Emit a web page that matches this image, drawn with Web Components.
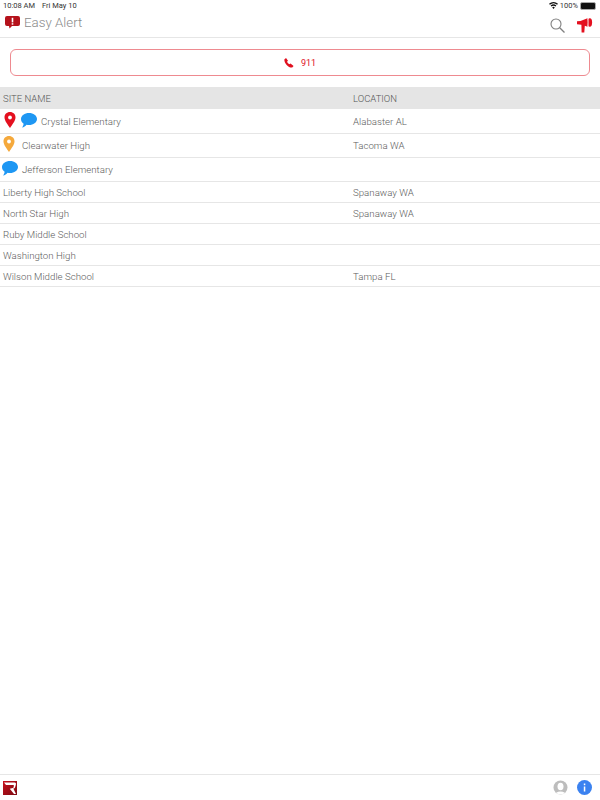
<!DOCTYPE html>
<html><head><meta charset="utf-8"><title>Easy Alert</title>
<style>
html,body{margin:0;padding:0;background:#fff}
body{font-family:Roboto,"Liberation Sans",sans-serif}
</style></head><body>
<ea-app></ea-app>
<script>
const def=(name,css,html)=>customElements.define(name,class extends HTMLElement{
  constructor(){super();this.attachShadow({mode:'open'}).innerHTML='<style>'+css+'</style>'+(typeof html==='function'?html(this):html);}
});
const pin=c=>`<svg style="color:${c};display:block" width="12" height="16" viewBox="0 0 12 16"><path fill="currentColor" d="M6 0C2.700 0 .5 2.400.5 5.400c0 3.400 3.400 7 5.500 10.600 2.100-3.600 5.500-7.200 5.500-10.600C11.500 2.400 9.300 0 6 0z"/><circle cx="6" cy="5.500" r="1.900" fill="#fff"/></svg>`;
const bubble=`<svg style="display:block" width="16" height="15" viewBox="0 0 16 15"><path fill="#1e97f3" d="M8 0c4.300 0 8 2.600 8 6s-3.700 6-8 6c-.9 0-1.700-.1-2.500-.3C4.500 13 2.900 14.200 1 14.500c.9-1 1.500-2.100 1.600-3.700C1 9.700 0 8 0 6c0-3.400 3.700-6 8-6z"/></svg>`;

def('ea-status',`:host{display:flex;justify-content:space-between;align-items:center;height:11px;padding:0 4px 0 3px;font:7.500px/11px Roboto,"Liberation Sans",sans-serif;color:#333}
.l{display:flex;gap:7px}.r{display:flex;align-items:center;gap:2px}
.bat{width:14px;height:6px;background:#111;border-radius:2px;border:0.500px solid #aaa;box-sizing:content-box}`,
`<div class="l"><span>10:08 AM</span><span>Fri May 10</span></div>
<div class="r"><svg width="9" height="7" viewBox="0 0 12 9"><path fill="#111" d="M6 9 4.300 7a2.600 2.600 0 0 1 3.400 0zM3.300 5.800 2.200 4.600a5.800 5.800 0 0 1 7.600 0L8.700 5.800a4.200 4.200 0 0 0-5.400 0zM1.200 3.500 0 2.300a8.900 8.900 0 0 1 12 0l-1.200 1.200a7.200 7.200 0 0 0-9.600 0z"/></svg><span>100%</span><span class="bat"></span></div>`);

def('ea-nav',`:host{display:flex;align-items:flex-start;justify-content:space-between;height:26px;padding:0 7px 0 5px;border-bottom:1px solid #e6e6e6;box-sizing:content-box}
.t{display:flex;align-items:center;gap:4px;font:300 13.300px/24px Roboto,"Liberation Sans",sans-serif;color:#8a8a8a}
.r{display:flex;align-items:center;gap:12px;margin-top:7px}svg{display:block}`,
`<div class="t"><svg width="15" height="14" viewBox="0 0 15 14"><path fill="#b5121b" d="M2 0h11a2 2 0 0 1 2 2v6a2 2 0 0 1-2 2H7l-2.500 2.500L4 10H2a2 2 0 0 1-2-2V2a2 2 0 0 1 2-2z"/><rect x="6.700" y="1.800" width="1.600" height="4.600" fill="#fff"/><rect x="6.700" y="7.200" width="1.600" height="1.500" fill="#fff"/></svg><span>Easy Alert</span></div>
<div class="r"><svg width="15" height="15" viewBox="0 0 15 15" fill="none" stroke="#808080" stroke-width="1.100"><circle cx="6" cy="6" r="5"/><path d="M9.700 9.700 14.500 14.500" stroke-width="1.300"/></svg>
<svg width="16" height="15" viewBox="0 0 16 15"><g fill="#e4101f"><path d="M0 3.200 3.500 3 10.500 .2V8.800L7.800 7.700 7.300 14.500 4.600 14.500 4.400 6.800 0 6.300z"/><ellipse cx="12.800" cy="4.500" rx="2.300" ry="4.200"/></g><path d="M11.200 .5V8.500" stroke="#fff" stroke-width=".7"/></svg></div>`);

def('ea-call',`:host{display:block;padding:11px 10px}
button{display:flex;align-items:center;justify-content:center;gap:7px;box-sizing:border-box;width:100%;height:27px;background:#fff;border:1px solid #ee8a90;border-radius:6px;padding:0;color:#e0101f;font:400 9px Roboto,"Liberation Sans",sans-serif}svg{display:block}`,
`<button><svg width="10" height="10" viewBox="0 0 10 10"><path fill="#e0101f" d="M.3 1.500 2 .1l2 2.600-1 1.100c.5 1.200 1.300 2 2.400 2.500l1.100-.9L9.600 7.900 8.200 9.600C4.500 10 .3 5.500.3 1.500z"/></svg><span>911</span></button>`);

const cols='grid-template-columns:350px 1fr;';
def('ea-head',`:host{display:grid;${cols}height:22px;align-items:center;background:#e5e5e5;padding-left:3px;font:300 9.500px/24px Roboto,"Liberation Sans",sans-serif;color:#555}`,
`<span>SITE NAME</span><span>LOCATION</span>`);

def('ea-row',`:host{display:grid;${cols}padding-left:3px;height:20px;align-items:center;border-bottom:1px solid #e6e6e6;font:300 9.700px Roboto,"Liberation Sans",sans-serif;color:#5c5c5c}
:host([tall]){height:23px}
.n{display:flex;align-items:center}`,
el=>`<div class="n"><slot name="icons"></slot><span>${el.getAttribute('name')}</span></div><span>${el.getAttribute('loc')||''}</span>`);

def('ea-icons',`:host{display:flex;align-items:flex-start;margin-left:-1px}`,`<slot></slot>`);

def('ea-foot',`:host{display:flex;justify-content:space-between;align-items:center;height:25px;border-top:1px solid #e6e6e6;padding:0 8px 0 3px}
.r{display:flex;gap:9px;align-items:center}svg{display:block}`,
`<svg width="14" height="14" viewBox="0 0 14 14"><defs><linearGradient id="g" x1="0" y1="0" x2="1" y2="1"><stop offset="0" stop-color="#c8101c"/><stop offset="1" stop-color="#7c0a12"/></linearGradient></defs><rect width="14" height="14" fill="url(#g)"/><path fill="#fff" d="M1 1.500H11.500C12.700 1.500 13.200 2.300 12.900 3.400L12.200 6C11.900 7 11.200 7.500 10.300 7.600L13 13H11L6.800 7.800 9.800 7C10.300 6.900 10.500 6.600 10.600 6.200L10.900 4.800C11 4.300 10.800 4 10.300 4H3z"/></svg>
<div class="r"><svg width="15" height="15" viewBox="0 0 15 15"><defs><clipPath id="c"><circle cx="7.500" cy="7.500" r="7"/></clipPath></defs><circle cx="7.500" cy="7.500" r="7" fill="#bdbdbd"/><g clip-path="url(#c)" fill="#fff"><ellipse cx="7.500" cy="6.500" rx="3" ry="3.800"/><ellipse cx="7.500" cy="16" rx="6" ry="4.500"/></g></svg>
<svg width="15" height="15" viewBox="0 0 15 15"><circle cx="7.500" cy="7.500" r="7.500" fill="#3b82f0"/><rect x="6.800" y="6.500" width="1.500" height="5" fill="#fff"/><rect x="6.800" y="3.500" width="1.500" height="1.700" fill="#fff"/></svg></div>`);

def('ea-app',`:host{display:flex;flex-direction:column;height:800px;overflow:hidden}
main{flex:1;padding-top:1px}`,
`<ea-status></ea-status><ea-nav></ea-nav><ea-call></ea-call>
<ea-head></ea-head>
<main>
<ea-row tall name="Crystal Elementary" loc="Alabaster AL"><ea-icons slot="icons"><span style="margin:-4px 5px 0 2px">${pin('#e4101f')}</span><span style="margin:-3px 4px 0 0">${bubble}</span></ea-icons></ea-row>
<ea-row tall name="Clearwater High" loc="Tacoma WA"><ea-icons slot="icons"><span style="margin:-4px 7px 0 1px">${pin('#f5a93c')}</span></ea-icons></ea-row>
<ea-row tall name="Jefferson Elementary"><ea-icons slot="icons"><span style="margin:-3px 4px 0 0">${bubble}</span></ea-icons></ea-row>
<ea-row name="Liberty High School" loc="Spanaway WA"></ea-row>
<ea-row name="North Star High" loc="Spanaway WA"></ea-row>
<ea-row name="Ruby Middle School"></ea-row>
<ea-row name="Washington High"></ea-row>
<ea-row name="Wilson Middle School" loc="Tampa FL"></ea-row>
</main>
<ea-foot></ea-foot>`);
</script>
</body></html>
